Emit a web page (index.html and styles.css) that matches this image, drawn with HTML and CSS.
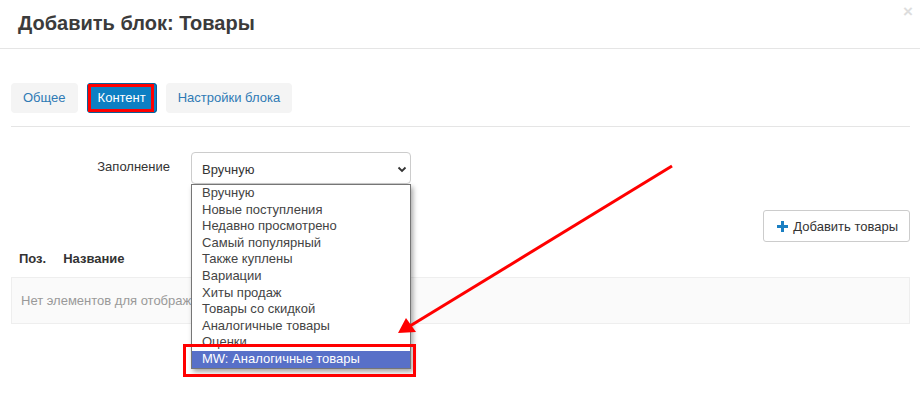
FILE: index.html
```html
<!DOCTYPE html>
<html lang="ru">
<head>
    <meta charset="UTF-8">
    <meta name="viewport" content="width=device-width, initial-scale=1.0">
    <title>Добавить блок: Товары</title>
    <link rel="stylesheet" href="styles.css">
</head>
<body>
    <div class="modal">
        <div class="modal-header">
            <h4 class="modal-title">Добавить блок: Товары</h4>
            <span class="close">&times;</span>
        </div>

        <div class="modal-body">
            <ul class="tabs">
                <li class="tab">Общее</li>
                <li class="tab active">Контент</li>
                <li class="tab">Настройки блока</li>
            </ul>

            <div class="form-row">
                <label class="control-label">Заполнение</label>
                <div class="select-wrap">
                    <div class="select-box">
                        <span>Вручную</span>
                        <svg class="chevron" width="10" height="7" viewBox="0 0 10 7">
                            <polyline points="1.5,1.5 5,5 8.5,1.5" fill="none" stroke="#333" stroke-width="1.8"/>
                        </svg>
                    </div>
                    <ul class="select-list">
                        <li>Вручную</li>
                        <li>Новые поступления</li>
                        <li>Недавно просмотрено</li>
                        <li>Самый популярный</li>
                        <li>Также куплены</li>
                        <li>Вариации</li>
                        <li>Хиты продаж</li>
                        <li>Товары со скидкой</li>
                        <li>Аналогичные товары</li>
                        <li>Оценки</li>
                        <li class="selected">MW: Аналогичные товары</li>
                    </ul>
                </div>
            </div>

            <div class="toolbar">
                <button class="btn-add">
                    <svg width="11" height="11" viewBox="0 0 11 11">
                        <rect x="4" y="0" width="3" height="11" fill="#1b7fc2"/>
                        <rect x="0" y="4" width="11" height="3" fill="#1b7fc2"/>
                    </svg>
                    Добавить товары
                </button>
            </div>

            <div class="table-head">
                <span class="col-pos">Поз.</span>
                <span>Название</span>
            </div>
            <div class="table-empty">Нет элементов для отображения</div>
        </div>

        <svg class="annotations" width="920" height="393" viewBox="0 0 920 393">
            <rect x="89.5" y="85.5" width="63" height="25" fill="none" stroke="#f00" stroke-width="3"/>
            <rect x="184.5" y="345.5" width="230" height="30" fill="none" stroke="#f00" stroke-width="3"/>
            <line x1="672" y1="166" x2="410" y2="326" stroke="#f00" stroke-width="3"/>
            <polygon points="398,333 406,318 416,332" fill="#f00"/>
        </svg>
    </div>
</body>
</html>
```

FILE: styles.css
```css
body {
    margin: 0;
    background-color: #fff;
    font-family: 'Liberation Sans', Arial, sans-serif;
    font-size: 13px;
    color: #333;
}

.modal {
    position: relative;
    width: 920px;
    height: 393px;
    overflow: hidden;
}

.modal-header {
    display: flex;
    justify-content: space-between;
    align-items: flex-start;
    height: 48px;
    padding: 0 7px 0 18px;
    border-bottom: 1px solid #e5e5e5;
}

.modal-title {
    margin: 0;
    padding-top: 11px;
    font-size: 20px;
    line-height: 24px;
    font-weight: bold;
    color: #3b3b3b;
}

.close {
    margin-top: 3px;
    font-size: 17px;
    font-weight: bold;
    line-height: 17px;
    color: #ddd;
}

.modal-body {
    padding: 0 10px 0 11px;
}

.tabs {
    display: flex;
    gap: 9px;
    list-style: none;
    margin: 0;
    padding: 34px 0 13px;
    border-bottom: 1px solid #e5e5e5;
}

.tab {
    height: 30px;
    line-height: 30px;
    padding: 0 12px;
    background-color: #f4f4f4;
    border-radius: 4px;
    color: #2f7ab4;
}

.tab.active {
    padding: 0 11px;
    background-color: #0d7fc3;
    color: #fff;
    box-shadow: 0 0 0 1px #0b5f98 inset;
}

.form-row {
    display: flex;
    align-items: center;
    gap: 21px;
    margin-top: 25px;
}

.control-label {
    width: 159px;
    text-align: right;
    margin-top: -3px;
}

.select-wrap {
    position: relative;
}

.select-box {
    display: flex;
    justify-content: space-between;
    align-items: center;
    box-sizing: border-box;
    width: 220px;
    height: 32px;
    padding: 2px 3px 0 10px;
    border: 1px solid #ccc;
    border-radius: 4px;
    background-color: #fff;
}

.select-list {
    position: absolute;
    top: 32px;
    left: 0;
    z-index: 2;
    box-sizing: border-box;
    width: 220px;
    margin: 0;
    padding: 0;
    list-style: none;
    background-color: #fff;
    border: 1px solid #767676;
    box-shadow: 2px 3px 5px rgba(0, 0, 0, 0.35);
}

.select-list li {
    height: 16.6px;
    line-height: 16.6px;
    padding-left: 10px;
    color: #444;
}

.select-list li.selected {
    background-color: #5870c8;
    color: #fff;
}

.toolbar {
    display: flex;
    justify-content: flex-end;
    margin-top: 26px;
}

.btn-add {
    display: flex;
    align-items: center;
    gap: 5px;
    height: 32px;
    padding: 0 11px 0 13px;
    background-color: #fff;
    border: 1px solid #ccc;
    border-radius: 3px;
    font-family: inherit;
    font-size: 13px;
    color: #333;
}

.table-head {
    display: flex;
    gap: 17px;
    padding: 9px 8px 0;
    line-height: 16px;
    font-weight: bold;
}

.table-empty {
    margin-top: 10px;
    height: 45px;
    line-height: 45px;
    padding-left: 9px;
    background-color: #fafafa;
    border: 1px solid #eee;
    color: #999;
}

.annotations {
    position: absolute;
    top: 0;
    left: 0;
    z-index: 5;
    pointer-events: none;
}
```
